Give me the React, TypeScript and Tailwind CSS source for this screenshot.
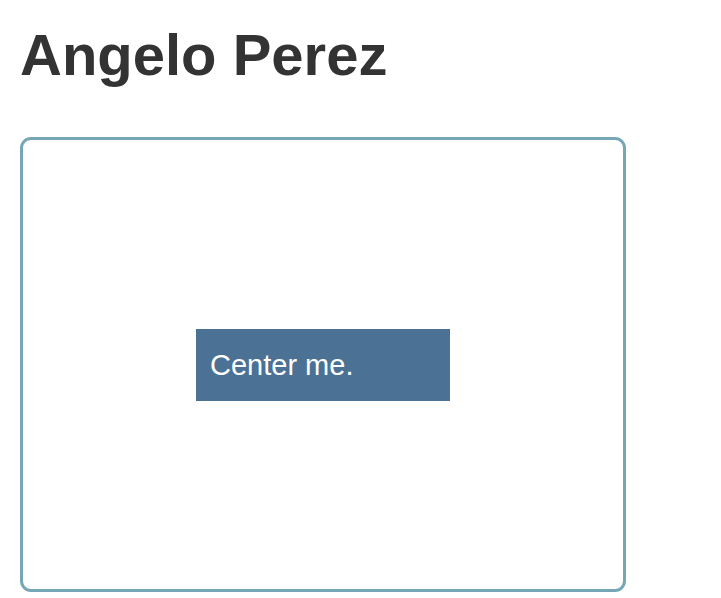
export default function App() {
  return (
    <div className="min-h-screen bg-white px-[20px] pt-[22px] font-['Liberation_Sans',Arial,sans-serif]">
      {/* Title */}
      <h1 className="text-[58px] font-bold leading-[65px] text-[#333333]">Angelo Perez</h1>

      {/* Frame with centered box */}
      <div className="mt-[50px] flex h-[455px] w-[606px] items-center justify-center rounded-[11px] border-[3px] border-[#76a7b6]">
        <div className="flex h-[72px] w-[254px] items-center bg-[#4b7194] px-[14px] pt-[3px] text-[29px] text-white">
          Center me.
        </div>
      </div>
    </div>
  )
}
